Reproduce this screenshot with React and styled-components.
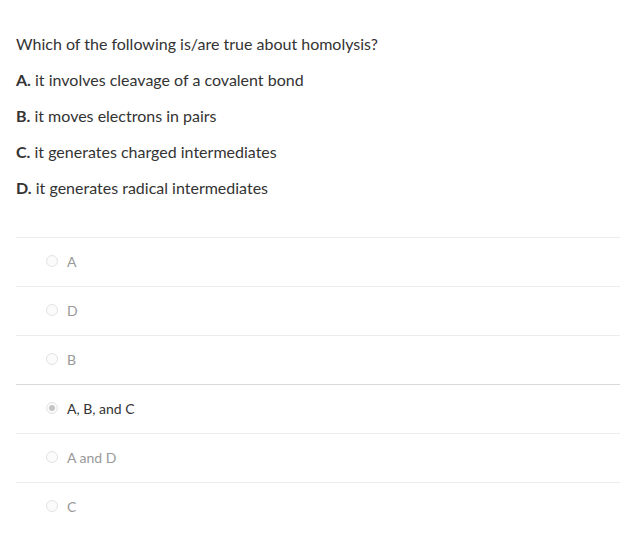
import React from "react";
import styled, { createGlobalStyle } from "styled-components";

const Global = createGlobalStyle`
  html, body { margin: 0; padding: 0; background: #fff; }
  body { font-family: Lato, "Open Sans", sans-serif; }
`;

const Page = styled.div`
  padding: 34px 13px 0 16px;
  width: 604px;
`;

const Question = styled.div`
  display: flex;
  flex-direction: column;
  gap: 16px;
  color: #333;
  font-size: 16px;
  line-height: 20px;
`;

const Line = styled.p`
  margin: 0;
`;

const Letter = styled.b`
  font-weight: 700;
`;

const Choices = styled.ul`
  list-style: none;
  margin: 39px 0 0;
  padding: 0;
`;

const Choice = styled.li`
  box-sizing: border-box;
  display: flex;
  align-items: center;
  height: 49px;
  padding: 0 0 2px 30px;
  border-top: 1px solid ${(p) => (p.$strong ? "#d9d9d9" : "#ececec")};
  gap: 9px;
  font-size: 14px;
  color: ${(p) => (p.$selected ? "#333" : "#999")};
`;

const Radio = styled.span`
  box-sizing: border-box;
  width: 12px;
  height: 12px;
  border-radius: 50%;
  border: 1px solid #e3e3e3;
  background: #fbfbfb;
  display: flex;
  align-items: center;
  justify-content: center;
  &::after {
    content: "";
    display: ${(p) => (p.$checked ? "block" : "none")};
    width: 6px;
    height: 6px;
    border-radius: 50%;
    background: #c4c4c4;
  }
`;

const statements = [
  ["A.", "it involves cleavage of a covalent bond"],
  ["B.", "it moves electrons in pairs"],
  ["C.", "it generates charged intermediates"],
  ["D.", "it generates radical intermediates"],
];

const options = ["A", "D", "B", "A, B, and C", "A and D", "C"];

export default function App() {
  return (
    <>
      <Global />
      <Page>
        <Question>
          <Line>Which of the following is/are true about homolysis?</Line>
          {statements.map(([l, t]) => (
            <Line key={l}>
              <Letter>{l}</Letter> {t}
            </Line>
          ))}
        </Question>
        <Choices>
          {options.map((o, i) => (
            <Choice key={o} $selected={i === 3} $strong={i === 3}>
              <Radio $checked={i === 3} />
              {o}
            </Choice>
          ))}
        </Choices>
      </Page>
    </>
  );
}
